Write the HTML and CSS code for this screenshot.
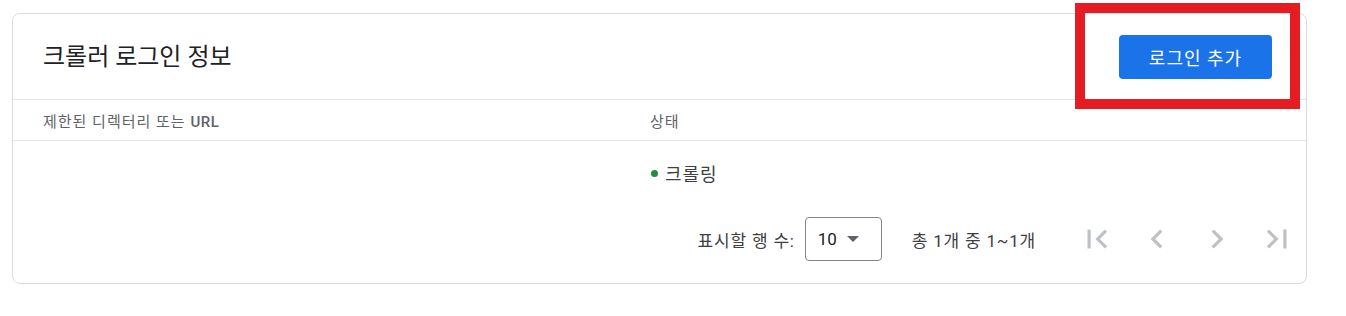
FILE: index.html
```html
<!DOCTYPE html>
<html lang="ko">
<head>
  <meta charset="UTF-8">
  <meta name="viewport" content="width=device-width, initial-scale=1.0">
  <title>크롤러 로그인 정보</title>
  <link rel="stylesheet" href="styles.css">
</head>
<body>
  <!-- Card -->
  <section class="card">
    <div class="card-header">
      <h2 class="card-title">크롤러 로그인 정보</h2>
      <button class="add-button">로그인 추가</button>
    </div>

    <div class="table-row table-head">
      <div>제한된 디렉터리 또는 <span class="latin">URL</span></div>
      <div>상태</div>
    </div>

    <div class="table-row table-body">
      <div></div>
      <div class="status"><span class="dot"></span>크롤링</div>
    </div>

    <!-- Pagination -->
    <div class="pager">
      <span class="pager-label">표시할 행 수:</span>
      <div class="page-size">
        <span>10</span>
        <span class="caret"></span>
      </div>
      <span class="pager-range">총 1개 중 1~1개</span>
      <div class="pager-buttons">
        <button class="icon-btn" aria-label="첫 페이지">
          <svg viewBox="0 0 24 24"><path d="M18.41 16.59L13.82 12l4.59-4.59L17 6l-6 6 6 6zM6 6h2v12H6z"/></svg>
        </button>
        <button class="icon-btn" aria-label="이전 페이지">
          <svg viewBox="0 0 24 24"><path d="M15.41 7.41L14 6l-6 6 6 6 1.41-1.41L10.83 12z"/></svg>
        </button>
        <button class="icon-btn" aria-label="다음 페이지">
          <svg viewBox="0 0 24 24"><path d="M10 6L8.59 7.41 13.17 12l-4.58 4.59L10 18l6-6z"/></svg>
        </button>
        <button class="icon-btn" aria-label="마지막 페이지">
          <svg viewBox="0 0 24 24"><path d="M5.59 7.41L10.18 12l-4.59 4.59L7 18l6-6-6-6zM16 6h2v12h-2z"/></svg>
        </button>
      </div>
    </div>
  </section>

  <!-- Highlight box -->
  <div class="highlight"></div>
</body>
</html>
```

FILE: styles.css
```css
/* General Styles */
body {
  font-family: Roboto, "Noto Sans CJK KR", sans-serif;
  margin: 0;
  padding: 13px 12px;
  background-color: #fff;
  color: #3c4043;
  position: relative;
}

/* Card */
.card {
  width: 1293px;
  border: 1px solid #dadce0;
  border-radius: 8px;
  background: white;
}

.card-header {
  display: flex;
  justify-content: space-between;
  align-items: center;
  height: 85px;
  padding: 0 34px 0 30px;
  border-bottom: 1px solid #e3e3e3;
}

.card-title {
  margin: 0;
  font-size: 24px;
  font-weight: 400;
  line-height: 28px;
  color: #202124;
}

.add-button {
  font-family: inherit;
  background-color: #1a73e8;
  color: white;
  border: none;
  border-radius: 4px;
  width: 153px;
  height: 44px;
  font-size: 18px;
  letter-spacing: 1px;
  cursor: pointer;
  margin-top: 1px;
}

/* Table */
.table-row {
  display: grid;
  grid-template-columns: 607px 1fr;
  padding: 0 30px;
  align-items: center;
}

.table-head {
  height: 40px;
  font-size: 15px;
  letter-spacing: 1px;
  color: #5f6368;
  border-bottom: 1px solid #e3e3e3;
}

.table-head .latin {
  font-weight: 500;
  letter-spacing: 0.5px;
}

.table-body {
  height: 64px;
  font-size: 18px;
  letter-spacing: 1px;
}

.status {
  display: flex;
  align-items: center;
  color: #3c4043;
}

.dot {
  width: 7px;
  height: 7px;
  border-radius: 50%;
  background-color: #1e8e3e;
  margin: 0 7px 0 1px;
}

/* Pagination */
.pager {
  display: flex;
  justify-content: flex-end;
  align-items: center;
  padding: 10px 5px 20px 0;
  font-size: 17px;
  letter-spacing: 0.8px;
  color: #3c4043;
}

.page-size {
  display: flex;
  align-items: center;
  height: 42px;
  width: 63px;
  margin-left: 10px;
  padding: 0 0 0 12px;
  border: 1px solid #80868b;
  border-radius: 4px;
  color: #202124;
  letter-spacing: 0;
}

.caret {
  width: 0;
  height: 0;
  margin-left: 10px;
  border-left: 6px solid transparent;
  border-right: 6px solid transparent;
  border-top: 6px solid #5f6368;
}

.pager-range {
  margin-left: 30px;
}

.pager-buttons {
  display: flex;
  gap: 12px;
  margin-left: 37px;
}

.icon-btn {
  width: 48px;
  height: 48px;
  padding: 0;
  border: none;
  background: none;
  display: flex;
  align-items: center;
  justify-content: center;
}

.icon-btn svg {
  width: 38px;
  height: 38px;
  fill: #bdc1c6;
}

/* Red annotation box */
.highlight {
  position: absolute;
  left: 1075px;
  top: 3px;
  width: 205px;
  height: 86px;
  border: 10px solid #e51d23;
}
```
